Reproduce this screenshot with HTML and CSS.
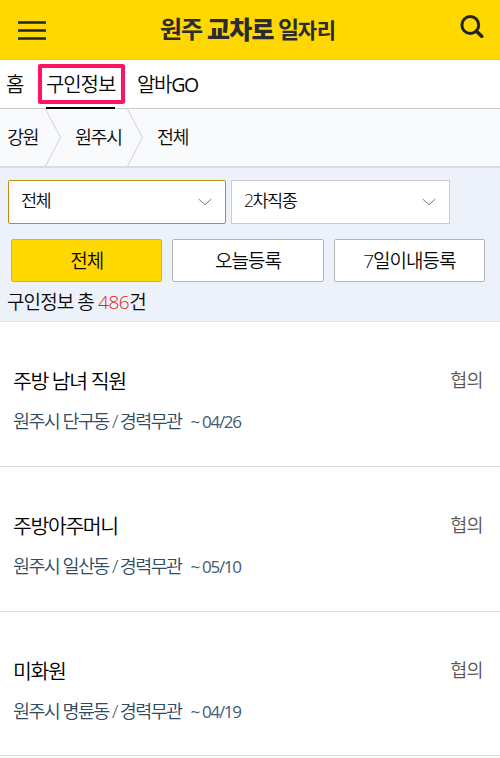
FILE: index.html
```html
<!DOCTYPE html>
<html lang="ko">
<head>
<meta charset="utf-8">
<title>원주 교차로 일자리</title>
<link rel="stylesheet" href="styles.css">
</head>
<body>
<header class="header">
  <svg class="menu" width="28" height="20" viewBox="0 0 28 20"><path d="M0 1.5H28M0 9.5H28M0 17.5H28" stroke="#22242b" stroke-width="2.6"/></svg>
  <h1 class="logo"><span class="logo-city">원주</span><span class="logo-brand">교차로</span><span class="logo-jobs"><span class="logo-tall">일</span>자리</span></h1>
  <svg class="search" width="24" height="24" viewBox="0 0 24 24" fill="none" stroke="#22242b" stroke-width="3" stroke-linecap="round"><circle cx="10.3" cy="10" r="8.4"/><path d="M16.5 16.2L21.7 21.2" stroke-width="3.6"/></svg>
</header>
<nav class="tabs">
  <a class="tab">홈</a>
  <a class="tab tab-active">구인정보<span class="marker"></span></a>
  <a class="tab tab-last">알바<span class="go">GO</span></a>
</nav>
<div class="path">
  <span class="crumb crumb-a">강원</span>
  <svg class="arrow" width="17" height="57" viewBox="0 0 17 57"><path d="M.5 0L15.5 28.5L.5 57" fill="none" stroke="#cfd1d5"/></svg>
  <span class="crumb crumb-b">원주시</span>
  <svg class="arrow" width="17" height="57" viewBox="0 0 17 57"><path d="M.5 0L15.5 28.5L.5 57" fill="none" stroke="#cfd1d5"/></svg>
  <span class="crumb crumb-c">전체</span>
</div>
<section class="filters">
  <div class="selects">
    <div class="select select-focus"><span>전체</span><svg width="14" height="8" viewBox="0 0 14 8"><path d="M.7 1L7 6.7L13.3 1" fill="none" stroke="#777"/></svg></div>
    <div class="select"><span>2차직종</span><svg width="14" height="8" viewBox="0 0 14 8"><path d="M.7 1L7 6.7L13.3 1" fill="none" stroke="#777"/></svg></div>
  </div>
  <div class="buttons">
    <div class="button button-on">전체</div>
    <div class="button">오늘등록</div>
    <div class="button">7일이내등록</div>
  </div>
  <p class="total">구인정보 총 <em>486</em>건</p>
</section>
<main>
  <article class="job">
    <div class="row"><h2>주방 남녀 직원</h2><span class="pay">협의</span></div>
    <p class="info">원주시 단구동 / 경력무관<span class="date">~ 04/26</span></p>
  </article>
  <article class="job">
    <div class="row"><h2>주방아주머니</h2><span class="pay">협의</span></div>
    <p class="info">원주시 일산동 / 경력무관<span class="date">~ 05/10</span></p>
  </article>
  <article class="job">
    <div class="row"><h2>미화원</h2><span class="pay">협의</span></div>
    <p class="info">원주시 명륜동 / 경력무관<span class="date">~ 04/19</span></p>
  </article>
</main>
</body>
</html>
```

FILE: styles.css
```css
* { box-sizing: border-box; }
body {
  margin: 0;
  height: 758px;
  overflow: hidden;
  background: #fff;
  color: #080808;
  font-family: "Open Sans", "Noto Sans CJK KR", sans-serif;
  font-weight: 350;
}
h1, h2, p { margin: 0; font-weight: inherit; }
.header {
  height: 60px;
  display: flex;
  align-items: flex-start;
  background: #ffd800;
  border-bottom: 1px solid #f5d000;
}
.menu { margin: 21px 0 0 18px; }
.logo {
  display: flex;
  margin-left: 114px;
  width: 301px;
  color: #2b2c31;
  font-family: "Noto Sans CJK KR", sans-serif;
  line-height: 56px;
  white-space: nowrap;
}
.logo-city { width: 47px; font-size: 24px; font-weight: 700; letter-spacing: -1px; }
.logo-brand { width: 71px; font-size: 25px; font-weight: 900; letter-spacing: -0.8px; }
.logo-jobs { font-size: 21px; font-weight: 700; letter-spacing: -0.2px; }
.logo-tall { font-size: 23px; letter-spacing: -1.5px; }
.search { margin-top: 15px; margin-left: -1px; }
.tabs {
  height: 49px;
  display: flex;
  padding-left: 6px;
  border-bottom: 1px solid #ccc;
  font-size: 20px;
  line-height: 50px;
  letter-spacing: -1.1px;
}
.tab { margin-right: 22px; width: 18px; white-space: nowrap; }
.tab-active { position: relative; width: 69px; height: 49px; border-bottom: 2px solid #000; }
.tab-last { width: auto; letter-spacing: -1.3px; }
.go { font-weight: 400; font-size: 19.5px; }
.marker {
  position: absolute;
  left: -8px;
  top: 4px;
  width: 87px;
  height: 40px;
  border: 4px solid #ff1464;
  border-radius: 2px;
}
.path {
  height: 59px;
  display: flex;
  border-bottom: 2px solid #dadce0;
  background: #f9fafc;
  font-size: 18.5px;
  line-height: 56px;
  letter-spacing: -1.5px;
  white-space: nowrap;
}
.crumb-a { width: 45px; padding-left: 7px; }
.crumb-b { width: 65px; padding-left: 13px; }
.crumb-c { padding-left: 13px; }
.filters {
  height: 154px;
  padding: 12px 8px 0;
  background: #edf1fa;
  border-bottom: 1px solid #e3e5e9;
}
.selects { display: flex; gap: 5px; }
.select {
  width: 219px;
  height: 44px;
  display: flex;
  justify-content: space-between;
  align-items: center;
  padding: 0 13px 0 12px;
  background: #fff;
  border: 1px solid #ccc;
  font-size: 17.5px;
  letter-spacing: -1.5px;
  line-height: 40px;
}
.select span { margin-top: -4px; }
.select-focus { width: 218px; border-color: #c88a08; border-radius: 2px; }
.buttons { display: flex; gap: 10px; margin: 15px 7px 0 3px; }
.button {
  flex: 1;
  height: 43px;
  background: #fff;
  border: 1px solid #b5b5b5;
  border-radius: 2px;
  text-align: center;
  font-size: 19px;
  line-height: 42px;
  letter-spacing: -1px;
}
.button-on { background: #ffd800; border-color: #dfb800; }
.total { margin-left: -1px; font-size: 19px; line-height: 40px; letter-spacing: -0.9px; }
.total em { color: #e3240c; font-style: normal; letter-spacing: -0.4px; }
.job { height: 145px; padding: 43px 17px 0 13px; border-bottom: 1px solid #ddd; }
.job:last-child { height: 144px; }
.row { display: flex; justify-content: space-between; height: 34px; line-height: 32px; }
h2 { font-size: 20.5px; color: #000; letter-spacing: -1.4px; }
.pay { font-size: 18.5px; line-height: 30px; color: #555; letter-spacing: -0.6px; }
.info { margin-top: 6px; font-size: 18.5px; line-height: 32px; letter-spacing: -1.6px; color: #304a62; }
.date { margin-left: 9px; font-size: 17px; font-weight: 400; letter-spacing: -1.3px; color: #445a70; }
```
